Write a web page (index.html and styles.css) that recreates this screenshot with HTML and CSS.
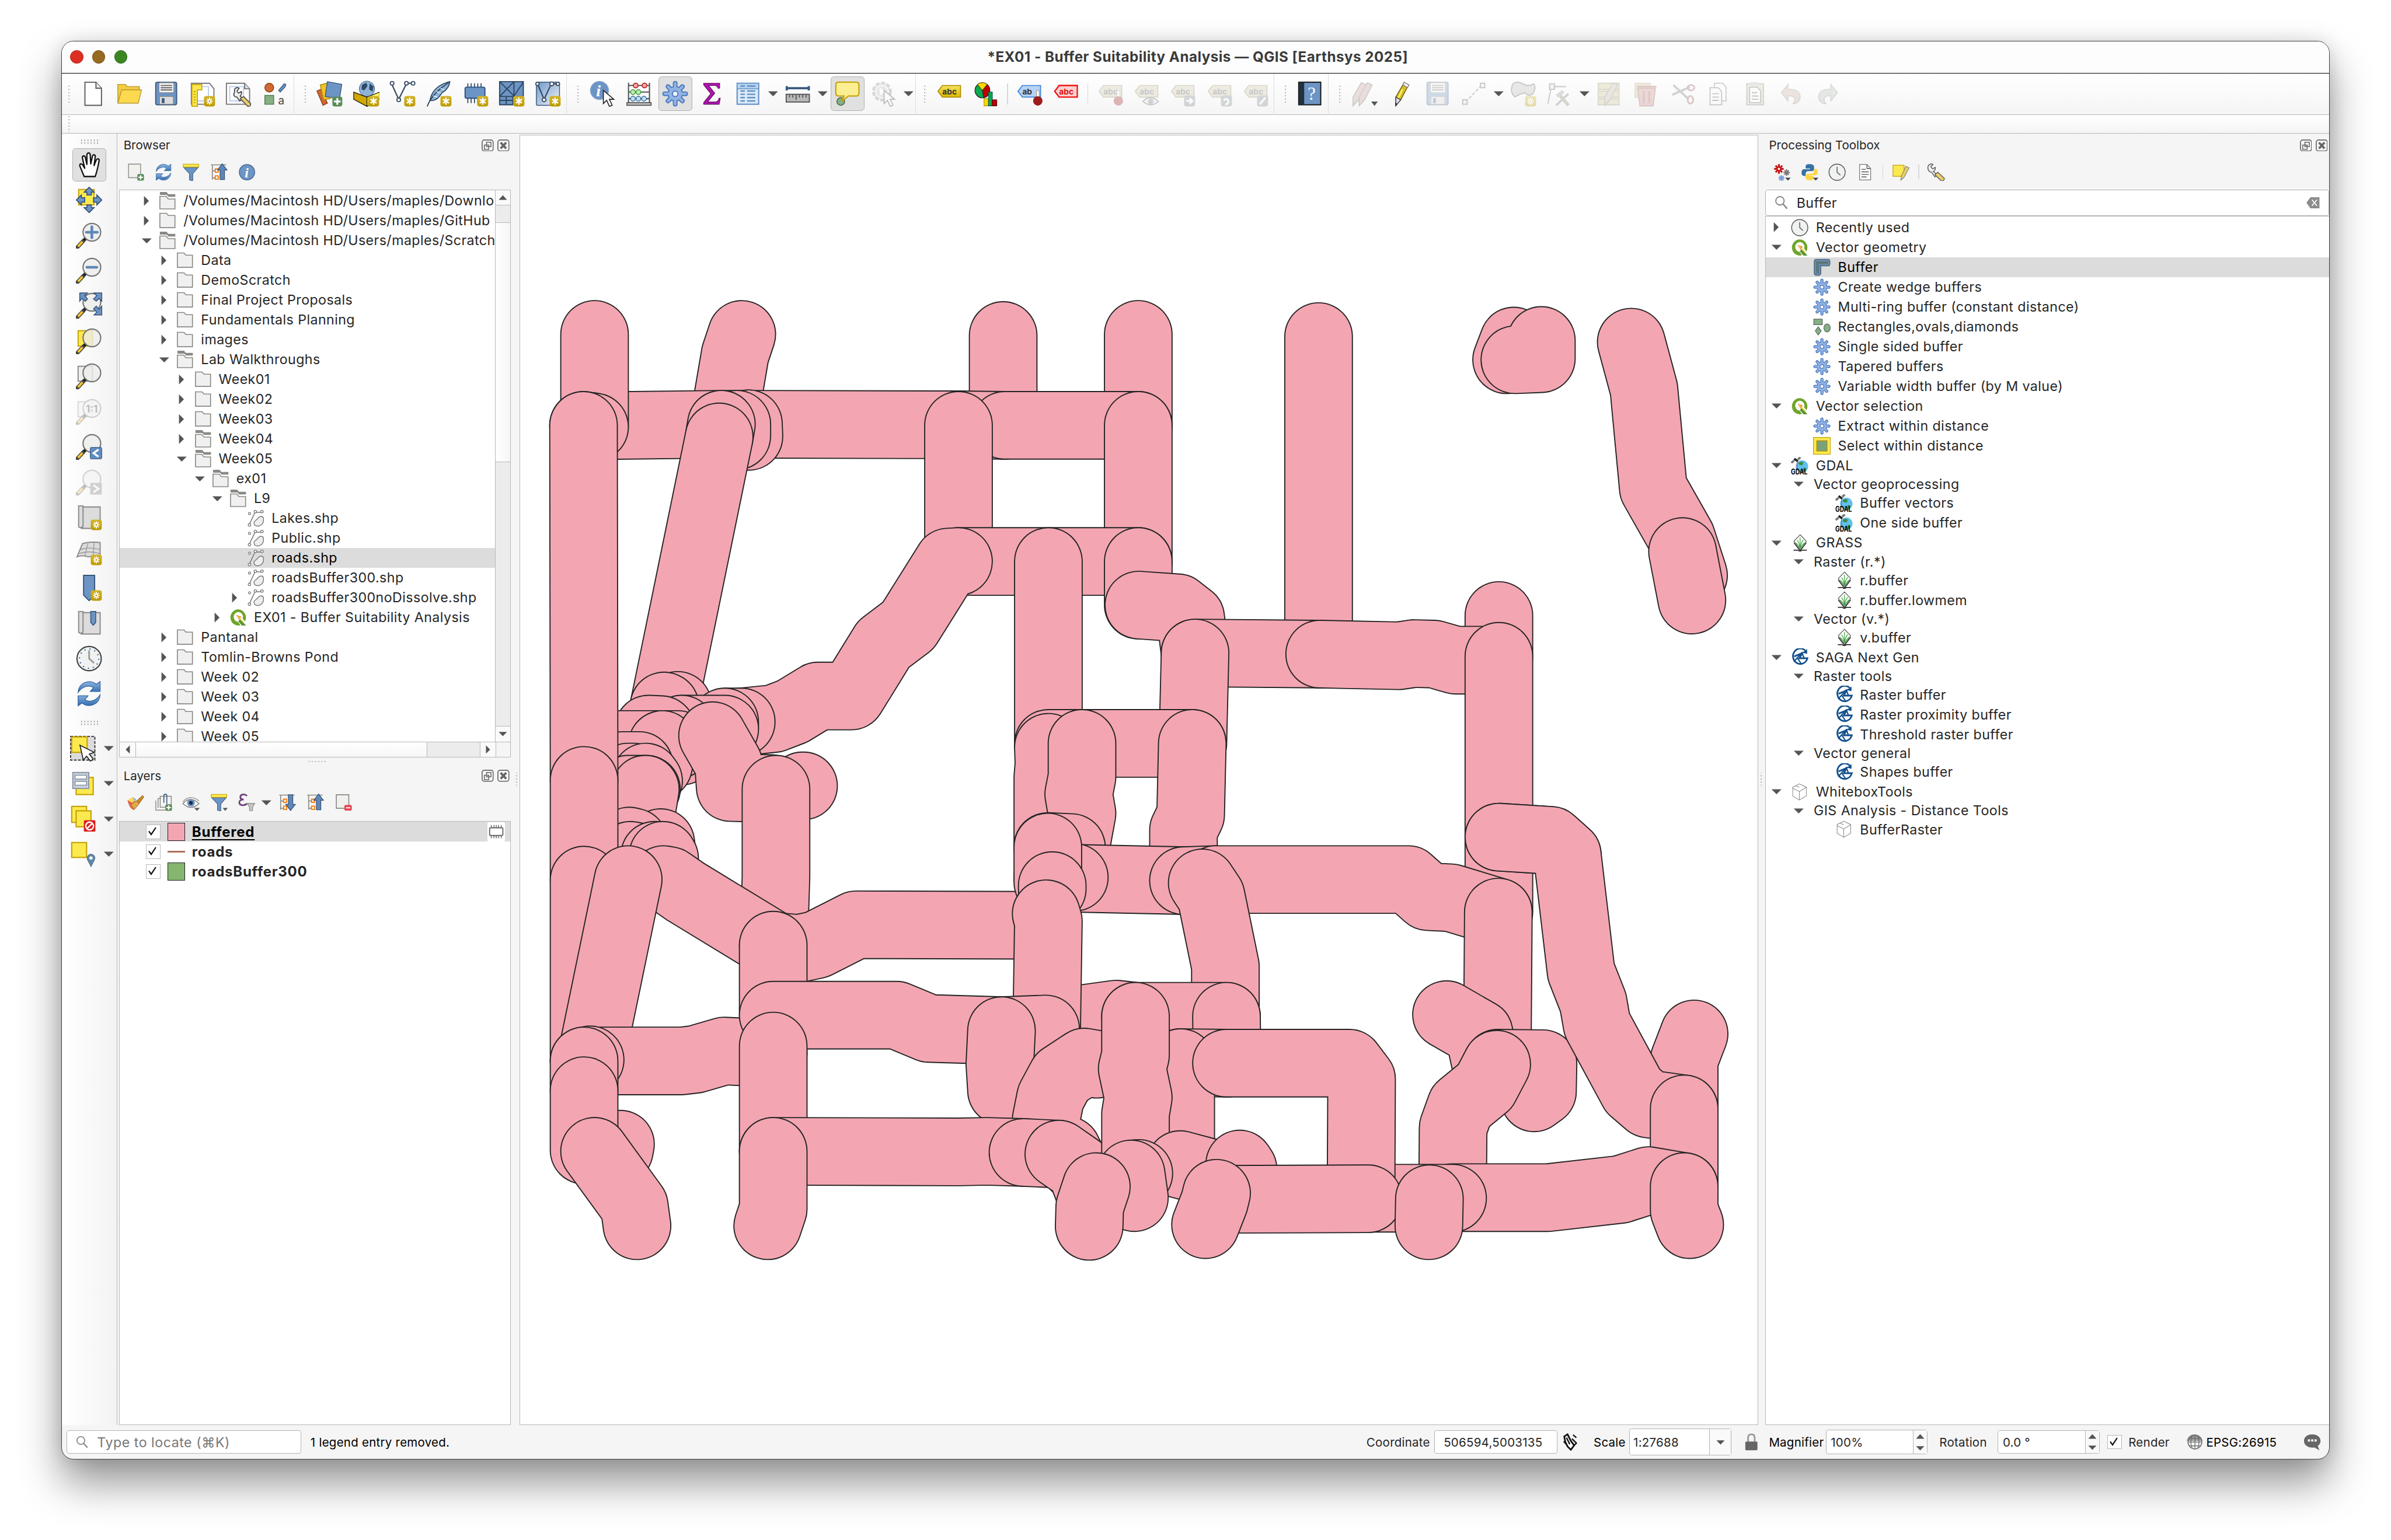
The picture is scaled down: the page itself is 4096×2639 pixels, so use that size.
FILE: index.html
```html
<!DOCTYPE html>
<html lang="en">
<head>
<meta charset="utf-8">
<title>*EX01 - Buffer Suitability Analysis — QGIS [Earthsys 2025]</title>
<link rel="stylesheet" href="styles.css">
</head>
<body>
<svg class="defs" aria-hidden="true">
<defs>
<linearGradient id="g-badge" x1="0" y1="0" x2="0" y2="1"><stop offset="0" stop-color="#d3b42a"/><stop offset="1" stop-color="#bd9a00"/></linearGradient>
<linearGradient id="g-blue" x1="0" y1="0" x2="0" y2="1"><stop offset="0" stop-color="#8fb6e0"/><stop offset="1" stop-color="#2f6cb0"/></linearGradient>
<linearGradient id="g-soft" x1="0" y1="0" x2="1" y2="1"><stop offset="0" stop-color="#6f98c9"/><stop offset="1" stop-color="#f2f5fa"/></linearGradient>
<linearGradient id="g-tag" x1="0" y1="0" x2="0" y2="1"><stop offset="0" stop-color="#f2e25c"/><stop offset="1" stop-color="#e0b800"/></linearGradient>
<symbol id="star" viewBox="0 0 48 48"><rect x="27" y="28" width="20" height="19" rx="4" fill="url(#g-badge)"/><path d="M37 31v13M31.500 34l11 7M42.500 34l-11 7" stroke="#fff" stroke-width="2.600" fill="none"/></symbol>
<symbol id="gearstar" viewBox="0 0 48 48"><rect x="27" y="28" width="20" height="19" rx="4" fill="url(#g-badge)"/><path d="M37 31v13M31 37.500h12M32.800 33l8.400 9M41.200 33l-8.400 9" stroke="#fff" stroke-width="2" fill="none"/><circle cx="37" cy="37.500" r="2.300" fill="#c4a000" stroke="#fff" stroke-width="1.500"/></symbol>
<symbol id="plus" viewBox="0 0 48 48"><rect x="29" y="29" width="18" height="18" rx="4" fill="#5a8c5a"/><path d="M38 32v12M32 38h12" stroke="#fff" stroke-width="3.500"/></symbol>
<symbol id="page" viewBox="0 0 48 48"><path d="M9 3h20l10 11v31H9z" fill="#fff" stroke="#5a5a5a" stroke-width="2"/><path d="M29 3v11h10" fill="#e8e8e8" stroke="#5a5a5a" stroke-width="2"/></symbol>
<symbol id="open" viewBox="0 0 48 48"><path d="M3 40V7h14l3 4h22v6" fill="#f3cb43" stroke="#b99a2d" stroke-width="1.500"/><path d="M3 41l7-24h36l-6 24z" fill="#fcd94f" stroke="#b99a2d" stroke-width="1.500"/></symbol>
<symbol id="save" viewBox="0 0 48 48"><rect x="5" y="3" width="38" height="41" rx="3" fill="#6c94c4" stroke="#3c5a80" stroke-width="2"/><rect x="11" y="4" width="27" height="18" rx="2" fill="#f0f0f0" stroke="#888" stroke-width="1.300"/><path d="M14 9h21M14 13h21M14 17h21" stroke="#555" stroke-width="1.800"/><rect x="12" y="29" width="25" height="14" fill="#dcdcdc" stroke="#888" stroke-width="1.300"/><rect x="16" y="32" width="5" height="9" fill="#3c5a80"/></symbol>
<symbol id="layout" viewBox="0 0 48 48"><path d="M4 5h33l8 10v28H4z" fill="#fff" stroke="#777" stroke-width="2"/><path d="M10 11h25v26H10z" fill="none" stroke="#b9cdf0" stroke-width="2"/><path d="M5 7h18v10h-8v30H5z" fill="#fce94f" stroke="#c4a000" stroke-width="1.700"/><path d="M8 20h4M8 25h4M8 30h4M8 35h4M8 40h4" stroke="#c4a000" stroke-width="1.800"/><use href="#gearstar"/></symbol>
<symbol id="layoutmgr" viewBox="0 0 48 48"><path d="M2 5h33l9 10v28H2z" fill="#fff" stroke="#777" stroke-width="2"/><path d="M8 11h25v26H8z" fill="none" stroke="#b9cdf0" stroke-width="2"/><path d="M35 5v10h9" fill="#ddd" stroke="#777" stroke-width="2"/><path d="M17 20c-2-5 3-9 8-6l-4 5 3 4 5-3c1 3 0 6-2 8l4 5-5 4-5-7c-4 0-7-3-5-7z" fill="#eee" stroke="#444" stroke-width="1.800"/><path d="M27 33l6-4 13 13q0 5-5 5z" fill="#e8cd6a" stroke="#555" stroke-width="1.800"/></symbol>
<symbol id="style" viewBox="0 0 48 48"><circle cx="13" cy="13" r="8" fill="#d06a32" stroke="#8a3f17" stroke-width="1.500"/><path d="M30 18L40 6l3 1-1 4-9 10z" fill="#6c94c4" stroke="#3c5a80" stroke-width="1.500"/><rect x="5" y="27" width="16" height="16" fill="#86b086" stroke="#4e7a4e" stroke-width="1.500"/><text x="29" y="43" font-size="20" fill="#444" class="it">a</text></symbol>
<symbol id="dsm" viewBox="0 0 48 48"><path d="M1 19l7-3 12 25-8 4z" fill="#d06a32" stroke="#8a3f17" stroke-width="1.500"/><path d="M7 8l12-3 6 28-12 2z" fill="#f0c420" stroke="#a98a10" stroke-width="1.500"/><path d="M20 2l26 5-4 26-26-4z" fill="#6c94c4" stroke="#3c5a80" stroke-width="1.500"/><use href="#plus"/></symbol>
<symbol id="gpkg" viewBox="0 0 48 48"><circle cx="25" cy="15" r="14" fill="#8fb3d8" stroke="#3c5a80"/><path d="M16 8l8-4 2 6-6 8-5-2zM30 5l7 6-2 9-6-4z" fill="#2e4a68"/><path d="M1 21l24 9v17L1 34z" fill="#d0a800" stroke="#111" stroke-width="1.300"/><path d="M48 21l-23 9v17l23-13z" fill="#fff36a" stroke="#111" stroke-width="1.300"/><use href="#star"/></symbol>
<symbol id="vlayer" viewBox="0 0 48 48"><path d="M5 8l12 26L30 8M33 5h8" fill="none" stroke="#3c4e66" stroke-width="2.400"/><g fill="#fff" stroke="#3c4e66" stroke-width="2"><circle cx="5" cy="5" r="3.300"/><circle cx="17" cy="35" r="3.300"/><circle cx="31" cy="5" r="3.300"/><circle cx="43" cy="5" r="3.300"/></g><use href="#star"/></symbol>
<symbol id="feather" viewBox="0 0 48 48"><path d="M44 2C28 6 12 14 8 36c8 2 16-4 22-14 6-3 13-10 14-20z" fill="#8fb3d8" stroke="#2d4560" stroke-width="1.800"/><path d="M42 4C26 14 10 28 3 47" fill="none" stroke="#2d4560" stroke-width="2"/><path d="M14 28l8 2M20 20l8 3M27 14l7 3" stroke="#fff" stroke-width="1.300"/><use href="#star"/></symbol>
<symbol id="chip" viewBox="0 0 48 48"><path d="M10 5v36M16 5v36M22 5v36M28 5v36M34 5v36" stroke="#2d4560" stroke-width="1.800"/><rect x="5" y="12" width="36" height="20" rx="3" fill="#6c94c4" stroke="#2d5080" stroke-width="2"/><use href="#star"/></symbol>
<symbol id="mesh" viewBox="0 0 48 48"><path d="M2 2h43v27H2zM2 29h24v15H2z" fill="#6c94c4" stroke="#2d4560" stroke-width="2"/><path d="M2 2l26 26M28 2L2 29M28 2v27M28 28L45 3M2 36h24M14 29v15" fill="none" stroke="#2d4560" stroke-width="2"/><use href="#star"/></symbol>
<symbol id="virt" viewBox="0 0 48 48"><rect x="3" y="3" width="42" height="42" rx="2" fill="url(#g-soft)" stroke="#3c5a80" stroke-width="1.500"/><path d="M4 3l13 31L30 6h12" fill="none" stroke="#2d4560" stroke-width="2.200"/><g fill="#fff" stroke="#3c4e66" stroke-width="2"><circle cx="5" cy="6" r="3"/><circle cx="17" cy="35" r="3.500"/><circle cx="31" cy="6" r="3.500"/><circle cx="42" cy="6" r="3"/></g><use href="#star"/></symbol>
<symbol id="cursor" viewBox="0 0 48 48"><path d="M25 18v24l6-6 5 11 5-2-5-11h8z" fill="#fff" stroke="#222" stroke-width="1.700"/></symbol>
<symbol id="info" viewBox="0 0 48 48"><circle cx="24" cy="24" r="21" fill="#6c94c4" stroke="#3c5f8c" stroke-width="2"/><text x="18" y="38" font-size="38" font-weight="bold" font-style="italic" fill="#fff" class="se">i</text></symbol>
<symbol id="identify" viewBox="0 0 48 48"><circle cx="18" cy="18" r="16.500" fill="#6c94c4" stroke="#8fabce" stroke-width="1.500"/><text x="12" y="29" font-size="30" font-weight="bold" font-style="italic" fill="#fff" class="se">i</text><use href="#cursor"/></symbol>
<symbol id="abacus" viewBox="0 0 48 48"><path d="M5 4v36M43 4v36M5 9h38M5 21h38M5 33h38" stroke="#555" stroke-width="2.200"/><g stroke-width="1.600"><g fill="#f4a6a0" stroke="#b01515"><circle cx="18" cy="9" r="4.300"/><circle cx="34" cy="9" r="4.300"/></g><g fill="#bdeeb0" stroke="#3f9a3f"><circle cx="13" cy="21" r="4.300"/><circle cx="23" cy="21" r="4.300"/></g><g fill="#bfe0f4" stroke="#3c6f9a"><circle cx="13" cy="33" r="4.300"/><circle cx="23" cy="33" r="4.300"/><circle cx="33" cy="33" r="4.300"/></g></g><rect x="2" y="40" width="44" height="5" fill="#bbb" stroke="#444" stroke-width="1.500"/></symbol>
<symbol id="gear" viewBox="0 0 48 48"><g stroke="#4a78c0" stroke-width="8.500" stroke-linecap="round"><path d="M24 5v38M5 24h38M11 11l26 26M37 11L11 37"/></g><circle cx="24" cy="24" r="14" fill="#4a78c0"/><g stroke="#92b3e2" stroke-width="4.500" stroke-linecap="round"><path d="M24 5v38M5 24h38M11 11l26 26M37 11L11 37"/></g><circle cx="24" cy="24" r="12" fill="#92b3e2"/><circle cx="24" cy="24" r="5" fill="#f4f7fc" stroke="#4a78c0" stroke-width="2"/></symbol>
<symbol id="sigma" viewBox="0 0 48 48"><path d="M9 5h29v9h-3c-1-4-3-5-7-5H18l11 14-13 16h14c4 0 6-3 7-7h2l-2 11H9v-3l13-16L9 8z" fill="#b314b3" stroke="#5a0a5a" stroke-width="1.200"/></symbol>
<symbol id="table" viewBox="0 0 48 48"><rect x="4" y="5" width="39" height="38" fill="#dcebf8" stroke="#5f8fc4" stroke-width="2.200"/><rect x="4" y="5" width="39" height="10" fill="#b9d4ee" stroke="#5f8fc4" stroke-width="1.500"/><path d="M10 10h8M22 10h15M10 19h8M22 19h15M10 25h8M22 25h15M10 31h8M22 31h15M10 37h8M22 37h15" stroke="#5f8fc4" stroke-width="2.600"/></symbol>
<symbol id="ruler" viewBox="0 0 48 48"><path d="M4 14h40M4 10v8M44 10v8" stroke="#3c5a80" stroke-width="4"/><rect x="3" y="25" width="42" height="14" fill="#b9b9b9" stroke="#555" stroke-width="2"/><path d="M9 26v5M15 26v5M21 26v9M27 26v5M33 26v5M39 26v5" stroke="#444" stroke-width="1.600"/></symbol>
<symbol id="tip" viewBox="0 0 48 48"><circle cx="12" cy="38" r="7" fill="#86b086" stroke="#44664a" stroke-width="1.600"/><path d="M8 3h32q5 0 5 5v15q0 5-5 5H26L13 38l5-10H8q-5 0-5-5V8q0-5 5-5z" fill="#fcee92" stroke="#c4a000" stroke-width="2.200"/></symbol>
<symbol id="action" viewBox="0 0 48 48"><circle cx="21" cy="20" r="16" fill="#eee" stroke="#888" stroke-width="4" stroke-dasharray="7 3.500"/><circle cx="21" cy="20" r="13.500" fill="#eee" stroke="#888" stroke-width="1.500"/><circle cx="21" cy="20" r="10" fill="#b5bac2"/><path d="M17 13l10 7-10 7z" fill="#fff"/><use href="#cursor"/></symbol>
<symbol id="abc" viewBox="0 0 48 48"><path d="M4 19.500L12 9h33v21H12z" fill="url(#g-tag)" stroke="#b08d00" stroke-width="1.800"/><text x="12" y="25" font-size="14.500" font-weight="bold" fill="#333" class="it">abc</text></symbol>
<symbol id="abcg" viewBox="0 0 48 48"><path d="M4 19.500L12 9h33v21H12z" fill="#cfc9a8" stroke="#8d875f" stroke-width="1.800"/><text x="12" y="25" font-size="14.500" font-weight="bold" fill="#555" class="it">abc</text></symbol>
<symbol id="abcred" viewBox="0 0 48 48"><path d="M4 19.500L12 9h33v21H12z" fill="#fbd0d0" stroke="#f01010" stroke-width="2.400"/><text x="12" y="25" font-size="14.500" font-weight="bold" fill="#e01010" class="it">abc</text></symbol>
<symbol id="pin" viewBox="0 0 48 48"><path d="M36.500 18h5v12h-5z" fill="#fff" stroke="#888"/><circle cx="39" cy="37" r="8.500" fill="#9c1c1c"/></symbol>
<symbol id="abpin" viewBox="0 0 48 48"><path d="M3 19.500L11 9h33v21H11z" fill="#b5d3f5" stroke="#3c82d8" stroke-width="1.800"/><text x="11" y="25" font-size="14.500" font-weight="bold" fill="#333" class="it">ab</text><use href="#pin"/></symbol>
<symbol id="chart" viewBox="0 0 48 48"><circle cx="19" cy="18" r="13.500" fill="#0aa84f" stroke="#222" stroke-width="1.300"/><path d="M19 18L10 7a14 14 0 0 1 18 0z" fill="#ffd800" stroke="#222"/><path d="M19 18L28 7a14 14 0 0 1-7 24z" fill="#c00000" stroke="#222"/><g stroke-width="1.200"><path d="M22 33h8v13h-8z" fill="#ffd800" stroke="#b58d00"/><path d="M30 21h7v25h-7z" fill="#0aa84f" stroke="#055"/><path d="M37 35h8v11h-8z" fill="#c00000" stroke="#600"/></g></symbol>
<symbol id="eyeb" viewBox="0 0 48 48"><path d="M18 38q12-14 28 0-14 12-28 0z" fill="#eee" stroke="#555" stroke-width="2"/><circle cx="32" cy="38" r="5" fill="#777"/></symbol>
<symbol id="sqb" viewBox="0 0 48 48"><rect x="27" y="27" width="20" height="20" rx="4" fill="#7f8790"/></symbol>
<symbol id="help" viewBox="0 0 48 48"><rect x="4" y="3" width="40" height="41" fill="#6c94c4" stroke="#111" stroke-width="2"/><path d="M4 3h10v41H4z" fill="#22303f"/><text x="20" y="35" font-size="33" fill="#fff" class="se">?</text></symbol>
<symbol id="pencil" viewBox="0 0 48 48"><path d="M15 30L30 4l8 4-14 27-9 10z" fill="#d8c020" stroke="#6b5c10" stroke-width="1.500"/><path d="M30 3l9 5-3 5-8-5z" fill="#eee" stroke="#777" stroke-width="1.300"/><path d="M27 16L19 33" stroke="#fff27a" stroke-width="2.500"/><path d="M15 30l9 5-9 11z" fill="#ddd" stroke="#444" stroke-width="1.500"/><path d="M14 40l4 2-4 5z" fill="#333"/></symbol>
<symbol id="pencils" viewBox="0 0 48 48"><g fill="#c9a9a0" stroke="#666" stroke-width="1.500"><path d="M3 30L18 4l9 4-14 27-10 11z"/><path d="M14 30L29 4l9 4-14 27-10 11z"/></g><path d="M26 8l-12 24M37 8L25 32" stroke="#a88" stroke-width="2"/></symbol>
<symbol id="linev" viewBox="0 0 48 48"><path d="M9 39L38 9" stroke="#777" stroke-width="2.500" stroke-dasharray="6 3"/><path d="M4 35h8v8H4zM36 5h8v8h-8z" fill="#eee" stroke="#555" stroke-width="2"/></symbol>
<symbol id="poly" viewBox="0 0 48 48"><path d="M5 6q8-6 18 0t20 0q5 8-2 18-8 6-14-2-10 2-18 8Q-2 20 5 6z" fill="#b8bdb8" stroke="#555" stroke-width="2"/><use href="#gearstar"/></symbol>
<symbol id="vtx" viewBox="0 0 48 48"><path d="M10 6L3 42M10 11h26" stroke="#666" stroke-width="2.200"/><path d="M6 6h9v10H6z" fill="#ddd" stroke="#555" stroke-width="2"/><path d="M40 24L18 45" stroke="#777" stroke-width="4"/><path d="M24 26l16 19" stroke="#8d8560" stroke-width="6"/><path d="M17 26l12-9 4 5-12 9z" fill="#999"/></symbol>
<symbol id="multi" viewBox="0 0 48 48"><path d="M4 5h38v11H4zM4 19h38v11H4zM4 33h38v11H4z" fill="#cdc58c" stroke="#8d855a" stroke-width="1.800"/><path d="M16 30L31 4l8 4-14 27-9 10z" fill="#cdb5a5" stroke="#777" stroke-width="1.500"/></symbol>
<symbol id="trash" viewBox="0 0 48 48"><path d="M4 5h28v26H4z" fill="#cdc58c" stroke="#8d855a"/><path d="M9 14h32l-4 32H13z" fill="#d08a8a" stroke="#a05050" stroke-width="2"/><path d="M8 11h35M20 19v22M30 19v22" stroke="#a05050" stroke-width="3"/></symbol>
<symbol id="cut" viewBox="0 0 48 48"><path d="M8 8l28 26M6 26l32-14" stroke="#777" stroke-width="4"/><ellipse cx="40" cy="13" rx="6" ry="5" fill="none" stroke="#a05050" stroke-width="3"/><ellipse cx="39" cy="35" rx="5" ry="7" fill="none" stroke="#a05050" stroke-width="3"/></symbol>
<symbol id="copy" viewBox="0 0 48 48"><path d="M17 5h15l6 7v25H17z" fill="#fff" stroke="#666" stroke-width="1.800"/><path d="M9 13h15l6 7v24H9z" fill="#fff" stroke="#555" stroke-width="1.800"/><path d="M13 24h12M13 30h12M13 36h12" stroke="#555" stroke-width="2"/></symbol>
<symbol id="paste" viewBox="0 0 48 48"><path d="M9 6h30v38H9z" fill="#d8d2b0" stroke="#777" stroke-width="2"/><path d="M14 12h14l6 7v21H14z" fill="#fff" stroke="#555" stroke-width="1.800"/><path d="M16 3h15v8H16z" fill="#bbb"/><path d="M18 22h10M18 28h12M18 34h12" stroke="#555" stroke-width="2"/></symbol>
<symbol id="undo" viewBox="0 0 48 48"><path d="M6 22L18 7v9c14-1 22 4 22 14 0 7-5 12-13 12 6-8 4-15-9-14v9z" fill="#d0b0a0" stroke="#888" stroke-width="1.600"/></symbol>
<symbol id="redo" viewBox="0 0 48 48"><path d="M42 22L30 7v9C16 15 8 20 8 30c0 7 5 12 13 12-6-8-4-15 9-14v9z" fill="#b5c0b5" stroke="#888" stroke-width="1.600"/></symbol>
<symbol id="hand" viewBox="0 0 48 48"><path d="M15 45l-7-17c-3-6 2-8 5-3l3 5-4-18c-1-5 4-6 5-2l3 13V6c0-5 6-5 6 0l1 16 3-14c1-4 6-3 5 2l-2 15 4-10c2-4 6-2 5 2-2 11-4 20-7 28z" fill="#fff" stroke="#111" stroke-width="2.400" stroke-linejoin="round"/></symbol>
<symbol id="panto" viewBox="0 0 48 48"><rect x="5" y="5" width="28" height="28" fill="#fce94f" stroke="#c4a000" stroke-width="2"/><path d="M24 1l9 9h-5v5h-8v-5h-5zM24 47l9-9h-5v-5h-8v5h-5zM1 24l9-9v5h6v8h-6v5zM47 24l-9-9v5h-6v8h6v5z" fill="#6c94c4" stroke="#35537a" stroke-width="1.800"/></symbol>
<symbol id="lens" viewBox="0 0 48 48"><path d="M3 45l11-12" stroke="#444" stroke-width="7" stroke-linecap="round"/><path d="M4 44l8-9" stroke="#fcc62f" stroke-width="4"/><circle cx="17" cy="30" r="3" fill="#111"/><circle cx="29" cy="18" r="16" fill="#ececea" fill-opacity=".8" stroke="#777" stroke-width="2.300"/></symbol>
<symbol id="zin" viewBox="0 0 48 48"><use href="#lens"/><path d="M29 8v20M19 18h20" stroke="#5f88b8" stroke-width="5" stroke-linecap="round"/></symbol>
<symbol id="zout" viewBox="0 0 48 48"><use href="#lens"/><path d="M20 18h18" stroke="#5f88b8" stroke-width="5" stroke-linecap="round"/></symbol>
<symbol id="zfull" viewBox="0 0 48 48"><use href="#lens"/><path d="M7 1h14l-5 5 5 6-4 4-6-5-4 5zM47 1H33l5 5-6 6 5 4 5-5 5 5zM47 41H33l5-5-6-6 5-5 5 6 5-6z" fill="#6c94c4" stroke="#35537a" stroke-width="1.600"/></symbol>
<symbol id="zsel" viewBox="0 0 48 48"><rect x="4" y="5" width="26" height="28" fill="#fce94f" stroke="#c4a000" stroke-width="2"/><use href="#lens"/></symbol>
<symbol id="zlay" viewBox="0 0 48 48"><rect x="4" y="6" width="26" height="27" fill="#eee" stroke="#888" stroke-width="2"/><use href="#lens"/></symbol>
<symbol id="znat" viewBox="0 0 48 48"><use href="#zlay"/><text x="18" y="25" font-size="18" font-weight="bold" fill="#333" class="it">1:1</text></symbol>
<symbol id="zprev" viewBox="0 0 48 48"><use href="#lens"/><rect x="26" y="25" width="21" height="21" rx="2" fill="#5f8cc0" stroke="#35537a"/><path d="M41 29l-9 6.500 9 6.500" fill="none" stroke="#fff" stroke-width="3.500"/></symbol>
<symbol id="znext" viewBox="0 0 48 48"><use href="#lens"/><rect x="26" y="25" width="21" height="21" rx="2" fill="#777"/><path d="M32 29l9 6.500-9 6.500" fill="none" stroke="#fff" stroke-width="3.500"/></symbol>
<symbol id="scroll" viewBox="0 0 48 48"><path d="M5 3h8v36q-3 6-8 2zM13 5h31v39H9q4-1 4-6z" fill="#dcdcdc" stroke="#888" stroke-width="2"/></symbol>
<symbol id="newmap" viewBox="0 0 48 48"><use href="#scroll"/><use href="#gearstar"/></symbol>
<symbol id="new3d" viewBox="0 0 48 48"><path d="M12 8q12-4 32-2v28q-14-4-22-2-10-4-20 0z" fill="#dcdcdc" stroke="#888" stroke-width="2"/><path d="M8 19q14-6 36 0M6 26q16-6 38 0M22 7l-6 24M33 6l-2 26" fill="none" stroke="#999" stroke-width="1.400"/><use href="#gearstar"/></symbol>
<symbol id="bkm" viewBox="0 0 48 48"><path d="M14 1h20v36l-10 10-10-10z" fill="#6c94c4" stroke="#35537a" stroke-width="2"/><use href="#gearstar"/></symbol>
<symbol id="bkms" viewBox="0 0 48 48"><use href="#scroll"/><path d="M27 3h9v20l-4.500 5-4.500-5z" fill="#6c94c4" stroke="#35537a" stroke-width="1.600"/></symbol>
<symbol id="clock" viewBox="0 0 48 48"><circle cx="24" cy="24" r="22" fill="#f0f2f2" stroke="#555" stroke-width="2.300"/><path d="M24 9v15l9 8" fill="none" stroke="#666" stroke-width="2.600"/></symbol>
<symbol id="clockt" viewBox="0 0 48 48"><circle cx="24" cy="24" r="22" fill="#f0f2f2" stroke="#444" stroke-width="2.300"/><circle cx="24" cy="24" r="17.500" fill="none" stroke="#4a6f9a" stroke-width="2.300" stroke-dasharray="2.300 6.860"/><path d="M24 9v15l9 8" fill="none" stroke="#999" stroke-width="3"/></symbol>
<symbol id="refresh" viewBox="0 0 48 48"><path d="M4 22C5 4 24-3 37 7l7-5v18H26l6-7C24 8 12 10 4 22z" fill="url(#g-blue)" stroke="#2f62a0" stroke-width="1.300"/><path d="M44 26C43 44 24 51 11 41l-7 5V28h18l-6 7c8 5 20 3 28-9z" fill="url(#g-blue)" stroke="#2f62a0" stroke-width="1.300"/></symbol>
<symbol id="select" viewBox="0 0 48 48"><rect x="1" y="2" width="44" height="43" fill="#dcdcdc" stroke="#333" stroke-width="2" stroke-dasharray="5 2.500"/><rect x="3" y="3" width="28" height="28" fill="#fce94f" stroke="#c4a000" stroke-width="2.200"/><path d="M18 18l6 27 6-7 7 9 5-4-7-9 9-3z" fill="#fff" stroke="#222" stroke-width="1.800"/></symbol>
<symbol id="selval" viewBox="0 0 48 48"><rect x="11" y="13" width="31" height="31" fill="#fce94f" stroke="#c4a000" stroke-width="2.200"/><rect x="5" y="4" width="29" height="29" fill="#c9d3df" stroke="#8792a0" stroke-width="2"/><path d="M9 9h21v7H9zM9 20h21v7H9z" fill="#fff" stroke="#8792a0" stroke-width="1.800"/></symbol>
<symbol id="desel" viewBox="0 0 48 48"><rect x="3" y="2" width="27" height="29" fill="#fce94f" stroke="#c4a000" stroke-width="2.200"/><rect x="11" y="10" width="27" height="29" fill="#fce94f" stroke="#c4a000" stroke-width="2.200"/><rect x="25" y="27" width="21" height="21" rx="2" fill="#dc2020"/><circle cx="35.500" cy="37.500" r="7" fill="none" stroke="#fff" stroke-width="2.500"/><path d="M31 42l9-9" stroke="#fff" stroke-width="2.500"/></symbol>
<symbol id="selloc" viewBox="0 0 48 48"><rect x="3" y="3" width="27" height="27" fill="#fce94f" stroke="#c4a000" stroke-width="2.200"/><path d="M38 47c-4-9-7-12-7-16a7 7 0 0 1 14 0c0 4-3 7-7 16z" fill="#5d87a8" stroke="#3d5f7a"/><circle cx="38" cy="31" r="3" fill="#fff"/></symbol>
<symbol id="addl" viewBox="0 0 48 48"><path d="M5 2h33v37H5z" fill="#f0f0ee" stroke="#8a8a84" stroke-width="2.200"/><use href="#plus"/></symbol>
<symbol id="reml" viewBox="0 0 48 48"><path d="M5 3h34v37H5z" fill="#f0f0ee" stroke="#8a8a84" stroke-width="2.600"/><rect x="27" y="31" width="20" height="15" rx="3" fill="#e84050"/><path d="M31 38.500h12" stroke="#fff" stroke-width="3"/></symbol>
<symbol id="filter" viewBox="0 0 48 48"><path d="M4 11l16 17v17l9 3V28l15-17z" fill="#6c94c4" stroke="#44658c" stroke-width="1.800"/><path d="M3 2h42v8H3z" fill="#fce94f" stroke="#c4a000" stroke-width="1.800"/></symbol>
<symbol id="tree" viewBox="0 0 48 48"><path d="M2 4h42M6 4v40M6 20h8M6 40h8" fill="none" stroke="#8a8a84" stroke-width="2.600"/><path d="M14 15h8v9h-8zM14 34h8v9h-8z" fill="#fff" stroke="#f57900" stroke-width="3"/></symbol>
<symbol id="collapse" viewBox="0 0 48 48"><use href="#tree"/><path d="M33 1l13 17h-7v26H27V18h-7z" fill="#5f88b8" stroke="#35537a" stroke-width="2"/></symbol>
<symbol id="expand" viewBox="0 0 48 48"><use href="#tree"/><path d="M33 46l13-17h-7V3H27v26h-7z" fill="#5f88b8" stroke="#35537a" stroke-width="2"/></symbol>
<symbol id="brush" viewBox="0 0 48 48"><path d="M2 18l14-9 8 12-14 8z" fill="#f6d860"/><path d="M2 18l4 12 10-4z" fill="#e05a50"/><path d="M16 9l10 6-4 6z" fill="#8fb3e0"/><path d="M6 30l16-10 10 10-12 15q-10-4-14-15z" fill="#e06a50"/><path d="M12 30l14-11 8 9-12 14q-8-4-10-12z" fill="#e0a848" stroke="#a86a14" stroke-width="1.400"/><path d="M27 20L43 5l4 4-13 18z" fill="#c98a2a" stroke="#8a5a14" stroke-width="1.400"/></symbol>
<symbol id="group" viewBox="0 0 48 48"><path d="M3 19v26h26M9 13v26M9 13h8M15 7h30v30H15z" fill="none" stroke="#8a8a84" stroke-width="2.400"/><path d="M25 25V4q4-6 8 0v24" fill="none" stroke="#35537a" stroke-width="2.500"/><use href="#plus"/></symbol>
<symbol id="eye" viewBox="0 0 48 48"><path d="M2 22Q22 0 46 20" fill="none" stroke="#8a8a84" stroke-width="2"/><path d="M2 27Q22 4 46 27 24 48 2 27z" fill="#fff" stroke="#777" stroke-width="2"/><circle cx="24" cy="25" r="10.500" fill="#6c94c4"/><circle cx="24" cy="25" r="5" fill="#1c2c40"/></symbol>
<symbol id="eps" viewBox="0 0 48 48"><path d="M24 6C16-1 5 3 6 10c0 4 4 6 9 6-7 0-12 3-12 8 0 9 14 10 21 3" fill="none" stroke="#6c3f78" stroke-width="4.500"/><path d="M25 27h20l-6 10v11h-8V37z" fill="#c8c8c4" stroke="#8a8a84" stroke-width="2"/></symbol>
<symbol id="folder" viewBox="0 0 48 48"><path d="M3 4h18l5 6h18v33H3z" fill="#f0f0f0" stroke="#888a85" stroke-width="2.600"/></symbol>
<symbol id="folders" viewBox="0 0 48 48"><path d="M3 0h18l5 6h19v7H26l-4-5H3z" fill="#888a85"/><path d="M3 12h17l6 7h18v27H3z" fill="#f0f0f0" stroke="#888a85" stroke-width="2.600"/></symbol>
<symbol id="shp" viewBox="0 0 48 48"><path d="M7 40L22 8h18M7 8v2" stroke="#777" stroke-width="2.400" fill="none"/><g fill="#fff" stroke="#777" stroke-width="2"><circle cx="7" cy="11" r="3"/><circle cx="7" cy="42" r="3.500"/><circle cx="23" cy="6" r="3.500"/><circle cx="41" cy="6" r="3.500"/></g><path d="M20 40c-3-10 6-9 11-17 5-6 13-5 14 2 1 9-3 17-12 20-6 1-11 0-13-5z" fill="#eee" stroke="#777" stroke-width="2.200"/></symbol>
<symbol id="q" viewBox="0 0 48 48"><path d="M24 2a21 22 0 1 0 6 43l-6-9a12.500 13.500 0 1 1 12-9l6 8A22 22 0 0 0 24 2z" fill="#6fa52c"/><path d="M30 28l15 18H34L24 34z" fill="#589632"/><path d="M18 17l14 5-5 9z" fill="#ee7913"/><path d="M22 20l17 18" stroke="#f0d64a" stroke-width="3"/></symbol>
<symbol id="bufi" viewBox="0 0 48 48"><path d="M3 8q0-6 6-6h33q4 0 4 9t-4 9H21v20q0 6-9 6t-9-6z" fill="#6a8aa6" stroke="#46637e" stroke-width="2"/><path d="M12 40V11h28" fill="none" stroke="#3c4e3c" stroke-width="4"/><path d="M12 40V11h28" fill="none" stroke="#7fa07f" stroke-width="1.500"/></symbol>
<symbol id="shapes" viewBox="0 0 48 48"><g fill="#86b086" stroke="#5a6a5a" stroke-width="2"><path d="M2 3h23v15H2zM14 24l8 11-8 11-8-11z"/><ellipse cx="38" cy="27" rx="8.500" ry="11"/></g></symbol>
<symbol id="seld" viewBox="0 0 48 48"><rect x="1" y="1" width="46" height="46" fill="#fce94f" stroke="#c4a000" stroke-width="2"/><rect x="10" y="10" width="28" height="28" fill="#7aa27a" stroke="#a88a00" stroke-width="2"/></symbol>
<symbol id="gdal" viewBox="0 0 48 48"><circle cx="30" cy="26" r="17" fill="#62c0ee"/><path d="M20 16q8-5 14-1l-3 8-9-2zM34 29l8 2-5 11-5-3z" fill="#3c8a3c"/><path d="M1 16l8-6M19 7l7-6" stroke="#777" stroke-width="6"/><path d="M9 5l10 7" stroke="#222" stroke-width="6"/><path d="M17 14v18" stroke="#d04040" stroke-width="1.800"/><text x="0" y="47" font-size="20" font-weight="bold" fill="#000" class="it" textLength="45" lengthAdjust="spacingAndGlyphs">GDAL</text></symbol>
<symbol id="grass" viewBox="0 0 48 48"><path d="M25 2l17 18-17 23L8 20z" fill="#fff" stroke="#555" stroke-width="1.800"/><path d="M7 44h12l6 4 5-4h13" fill="none" stroke="#111" stroke-width="2.200"/><path d="M8 24l17 22 17-22" fill="none" stroke="#222" stroke-width="2"/><path d="M17 17q6 8 8 22M25 9v30M34 16q-7 8-9 23M12 24q8 5 12 15M38 24q-8 5-12 15" fill="none" stroke="#3aa53a" stroke-width="1.900"/></symbol>
<symbol id="saga" viewBox="0 0 48 48"><path d="M43 11A20 21 0 1 0 45 27H23l8-14-22 9" fill="none" stroke="#13508e" stroke-width="4.500"/><path d="M8 36L30 12l6 15M18 27l10 15" fill="none" stroke="#13508e" stroke-width="3.500"/><path d="M44 2v13l-12-3z" fill="#13508e"/></symbol>
<symbol id="wbt" viewBox="0 0 48 48"><path d="M23 2l19 9v24L23 46 5 35V11zM5 14l18 9 18-11M23 23v23M14 8l9 3" fill="#fff" stroke="#888" stroke-width="1.600"/></symbol>
<symbol id="gears" viewBox="0 0 48 48"><g stroke="#c81414" stroke-width="5"><path d="M15 2v26M2 15h26M6 6l18 18M24 6L6 24"/></g><circle cx="15" cy="15" r="3" fill="#fff"/><g stroke="#777" stroke-width="3.500"><path d="M36 16v18M27 25h18M30 19l12 12M42 19L30 31"/></g><g stroke="#7f9fd8" stroke-width="3.500"><path d="M22 32v16M14 40h16M16 34l12 12M28 34L16 46"/></g><path d="M32 39h15l-7.500 8z" fill="#444"/></symbol>
<symbol id="py" viewBox="0 0 48 48"><path d="M23 2c-8 0-10 3-10 7v5h12v2H9c-5 0-7 4-7 9s2 9 6 9h5v-6c0-4 3-7 7-7h11c3 0 5-3 5-6V9c0-4-4-7-13-7z" fill="#3672a4"/><path d="M25 46c8 0 10-3 10-7v-5H23v-2h16c5 0 7-4 7-9s-2-8-6-8h-4v6c0 4-3 7-7 7H18c-3 0-5 3-5 6v5c0 4 4 7 12 7z" fill="#ffd545"/><path d="M33 39h15l-7.500 8z" fill="#444"/></symbol>
<symbol id="log" viewBox="0 0 48 48"><path d="M9 3h20l10 11v31H9z" fill="#fff" stroke="#777" stroke-width="2"/><path d="M29 3v11h10M14 16h12M14 23h20M14 30h20M14 37h14" fill="none" stroke="#555" stroke-width="2.200"/></symbol>
<symbol id="edf" viewBox="0 0 48 48"><path d="M3 5h30v30H3z" fill="#fce94f" stroke="#c4a000" stroke-width="2"/><path d="M38 8l9 4-14 26-9 8 2-12z" fill="#e8cd6a" stroke="#777" stroke-width="1.600"/></symbol>
<symbol id="wr2" viewBox="0 0 48 48"><path d="M1 12C0 5 8-1 15 3l-6 6 5 6 7-4c1 6-1 9-5 11l10 9-6 6-9-13C5 24 1 19 1 12z" fill="#eee" stroke="#555" stroke-width="2.200"/><path d="M20 31l8-7 18 17q-1 7-8 7z" fill="#e8cd6a" stroke="#555" stroke-width="2.200"/></symbol>
<symbol id="ar" viewBox="0 0 24 24"><path d="M7 3l9 9-9 9z" fill="#555"/></symbol>
<symbol id="ad" viewBox="0 0 24 24"><path d="M3 8h18l-9 9z" fill="#555"/></symbol>
<symbol id="au" viewBox="0 0 24 24"><path d="M3 17h18l-9-10z" fill="#555"/></symbol>
<symbol id="al" viewBox="0 0 24 24"><path d="M17 3l-9 9 9 9z" fill="#555"/></symbol>
<symbol id="float" viewBox="0 0 22 22"><rect x="1" y="1" width="20" height="20" rx="4" fill="none" stroke="#666" stroke-width="1.800"/><path d="M9 5h8v8h-8zM5 10h8v8H5z" fill="#f5f5f5" stroke="#666" stroke-width="1.600"/></symbol>
<symbol id="close" viewBox="0 0 22 22"><rect x="1" y="1" width="20" height="20" rx="4" fill="none" stroke="#666" stroke-width="1.800"/><path d="M6 5.500l10 11M16 5.500l-10 11" stroke="#666" stroke-width="4"/></symbol>
<symbol id="mag" viewBox="0 0 24 24"><circle cx="10" cy="9" r="7" fill="none" stroke="#8c8c8c" stroke-width="2"/><path d="M15 14l7 8" stroke="#8c8c8c" stroke-width="2.600"/></symbol>
<symbol id="tick" viewBox="0 0 26 26"><path d="M5 13l5 7L20 5" fill="none" stroke="#111" stroke-width="2.800"/></symbol>
</defs>
</svg>

<main class="window">
<header class="titlebar"><i class="light red"></i><i class="light amber"></i><i class="light green"></i><h1>*EX01 - Buffer Suitability Analysis — QGIS [Earthsys 2025]</h1></header>

<nav class="bars">
<div class="tb"><i class="grip"></i><b class="t"><svg><use href="#page"/></svg></b><b class="t"><svg><use href="#open"/></svg></b><b class="t"><svg><use href="#save"/></svg></b><b class="t"><svg><use href="#layout"/></svg></b><b class="t"><svg><use href="#layoutmgr"/></svg></b><b class="t"><svg><use href="#style"/></svg></b></div>
<div class="tb"><i class="grip"></i><b class="t"><svg><use href="#dsm"/></svg></b><b class="t"><svg><use href="#gpkg"/></svg></b><b class="t"><svg><use href="#vlayer"/></svg></b><b class="t"><svg><use href="#feather"/></svg></b><b class="t"><svg><use href="#chip"/></svg></b><b class="t"><svg><use href="#mesh"/></svg></b><b class="t"><svg><use href="#virt"/></svg></b></div>
<div class="tb"><i class="grip"></i><b class="t"><svg><use href="#identify"/></svg></b><b class="t"><svg><use href="#abacus"/></svg></b><b class="t on"><svg><use href="#gear"/></svg></b><b class="t"><svg><use href="#sigma"/></svg></b><b class="t"><svg><use href="#table"/></svg></b><svg class="dd"><use href="#ad"/></svg><b class="t"><svg><use href="#ruler"/></svg></b><svg class="dd"><use href="#ad"/></svg><b class="t on"><svg><use href="#tip"/></svg></b><b class="t off"><svg><use href="#action"/></svg></b><svg class="dd"><use href="#ad"/></svg></div>
<div class="tb labels"><i class="grip"></i><b class="t"><svg><use href="#abc"/></svg></b><b class="t"><svg><use href="#chart"/></svg></b><i class="sep"></i><b class="t"><svg><use href="#abpin"/></svg></b><b class="t"><svg><use href="#abcred"/></svg></b><i class="sep"></i><b class="t off"><svg><use href="#abcg"/><use href="#pin"/></svg></b><b class="t off"><svg><use href="#abcg"/><use href="#eyeb"/></svg></b><b class="t off"><svg viewBox="0 0 48 48"><use href="#abcg"/><use href="#sqb"/><path d="M31 37h10M37 32l5 5-5 5" fill="none" stroke="#fff" stroke-width="3.500"/></svg></b><b class="t off"><svg viewBox="0 0 48 48"><use href="#abcg"/><use href="#sqb"/><path d="M35 44q8-3 5-8t-8 0" fill="none" stroke="#fff" stroke-width="3.500"/></svg></b><b class="t off"><svg viewBox="0 0 48 48"><use href="#abcg"/><use href="#sqb"/><path d="M32 43l10-12" fill="none" stroke="#fff" stroke-width="3.500"/></svg></b></div>
<div class="tb"><i class="grip"></i><b class="t"><svg><use href="#help"/></svg></b></div>
<div class="tb grow"><i class="grip"></i><b class="t menu"><svg viewBox="0 0 48 48"><use href="#pencils" opacity=".35"/><path d="M36 38h12l-6 8z" fill="#555"/></svg></b><b class="t"><svg><use href="#pencil"/></svg></b><b class="t off"><svg><use href="#save"/></svg></b><b class="t off"><svg><use href="#linev"/></svg></b><svg class="dd"><use href="#ad"/></svg><b class="t off"><svg><use href="#poly"/></svg></b><b class="t off"><svg><use href="#vtx"/></svg></b><svg class="dd"><use href="#ad"/></svg><b class="t off"><svg><use href="#multi"/></svg></b><b class="t off"><svg><use href="#trash"/></svg></b><b class="t off"><svg><use href="#cut"/></svg></b><b class="t off"><svg><use href="#copy"/></svg></b><b class="t off"><svg><use href="#paste"/></svg></b><b class="t off"><svg><use href="#undo"/></svg></b><b class="t off"><svg><use href="#redo"/></svg></b></div>
</nav>
<div class="bar2"><i class="grip"></i></div>

<section class="work">
<aside class="vbar">
<i class="hgrip"></i>
<b class="t on"><svg><use href="#hand"/></svg></b><b class="t"><svg><use href="#panto"/></svg></b><b class="t"><svg><use href="#zin"/></svg></b><b class="t"><svg><use href="#zout"/></svg></b><b class="t"><svg><use href="#zfull"/></svg></b><b class="t"><svg><use href="#zsel"/></svg></b><b class="t"><svg><use href="#zlay"/></svg></b><b class="t off"><svg><use href="#znat"/></svg></b><b class="t"><svg><use href="#zprev"/></svg></b><b class="t off"><svg><use href="#znext"/></svg></b><b class="t"><svg><use href="#newmap"/></svg></b><b class="t"><svg><use href="#new3d"/></svg></b><b class="t"><svg><use href="#bkm"/></svg></b><b class="t"><svg><use href="#bkms"/></svg></b><b class="t"><svg><use href="#clockt"/></svg></b><b class="t"><svg><use href="#refresh"/></svg></b>
<i class="hgrip low"></i>
<div class="pair"><b class="t"><svg><use href="#select"/></svg></b><svg class="dd"><use href="#ad"/></svg></div>
<div class="pair"><b class="t"><svg><use href="#selval"/></svg></b><svg class="dd"><use href="#ad"/></svg></div>
<div class="pair"><b class="t"><svg><use href="#desel"/></svg></b><svg class="dd"><use href="#ad"/></svg></div>
<div class="pair"><b class="t"><svg><use href="#selloc"/></svg></b><svg class="dd"><use href="#ad"/></svg></div>
</aside>

<section class="left">
<div class="phead"><h2>Browser</h2><svg><use href="#float"/></svg><svg><use href="#close"/></svg></div>
<div class="ptools"><svg><use href="#addl"/></svg><svg><use href="#refresh"/></svg><svg><use href="#filter"/></svg><svg><use href="#collapse"/></svg><svg><use href="#info"/></svg></div>
<div class="box browser">
<div class="mid">
<ul class="rows br">
<li><svg class="a"><use href="#ar"/></svg><svg class="k"><use href="#folders"/></svg>/Volumes/Macintosh HD/Users/maples/Downlo</li>
<li><svg class="a"><use href="#ar"/></svg><svg class="k"><use href="#folder"/></svg>/Volumes/Macintosh HD/Users/maples/GitHub</li>
<li><svg class="a"><use href="#ad"/></svg><svg class="k"><use href="#folders"/></svg>/Volumes/Macintosh HD/Users/maples/Scratch</li>
<li class="l1"><svg class="a"><use href="#ar"/></svg><svg class="k"><use href="#folder"/></svg>Data</li>
<li class="l1"><svg class="a"><use href="#ar"/></svg><svg class="k"><use href="#folder"/></svg>DemoScratch</li>
<li class="l1"><svg class="a"><use href="#ar"/></svg><svg class="k"><use href="#folder"/></svg>Final Project Proposals</li>
<li class="l1"><svg class="a"><use href="#ar"/></svg><svg class="k"><use href="#folder"/></svg>Fundamentals Planning</li>
<li class="l1"><svg class="a"><use href="#ar"/></svg><svg class="k"><use href="#folder"/></svg>images</li>
<li class="l1"><svg class="a"><use href="#ad"/></svg><svg class="k"><use href="#folders"/></svg>Lab Walkthroughs</li>
<li class="l2"><svg class="a"><use href="#ar"/></svg><svg class="k"><use href="#folder"/></svg>Week01</li>
<li class="l2"><svg class="a"><use href="#ar"/></svg><svg class="k"><use href="#folder"/></svg>Week02</li>
<li class="l2"><svg class="a"><use href="#ar"/></svg><svg class="k"><use href="#folder"/></svg>Week03</li>
<li class="l2"><svg class="a"><use href="#ar"/></svg><svg class="k"><use href="#folders"/></svg>Week04</li>
<li class="l2"><svg class="a"><use href="#ad"/></svg><svg class="k"><use href="#folders"/></svg>Week05</li>
<li class="l3"><svg class="a"><use href="#ad"/></svg><svg class="k"><use href="#folders"/></svg>ex01</li>
<li class="l4"><svg class="a"><use href="#ad"/></svg><svg class="k"><use href="#folders"/></svg>L9</li>
<li class="l5"><svg class="a"></svg><svg class="k"><use href="#shp"/></svg>Lakes.shp</li>
<li class="l5"><svg class="a"></svg><svg class="k"><use href="#shp"/></svg>Public.shp</li>
<li class="l5 sel"><svg class="a"></svg><svg class="k"><use href="#shp"/></svg>roads.shp</li>
<li class="l5"><svg class="a"></svg><svg class="k"><use href="#shp"/></svg>roadsBuffer300.shp</li>
<li class="l5"><svg class="a"><use href="#ar"/></svg><svg class="k"><use href="#shp"/></svg>roadsBuffer300noDissolve.shp</li>
<li class="l4"><svg class="a"><use href="#ar"/></svg><svg class="k"><use href="#q"/></svg>EX01 - Buffer Suitability Analysis</li>
<li class="l1"><svg class="a"><use href="#ar"/></svg><svg class="k"><use href="#folder"/></svg>Pantanal</li>
<li class="l1"><svg class="a"><use href="#ar"/></svg><svg class="k"><use href="#folder"/></svg>Tomlin-Browns Pond</li>
<li class="l1"><svg class="a"><use href="#ar"/></svg><svg class="k"><use href="#folder"/></svg>Week 02</li>
<li class="l1"><svg class="a"><use href="#ar"/></svg><svg class="k"><use href="#folder"/></svg>Week 03</li>
<li class="l1"><svg class="a"><use href="#ar"/></svg><svg class="k"><use href="#folder"/></svg>Week 04</li>
<li class="l1"><svg class="a"><use href="#ar"/></svg><svg class="k"><use href="#folder"/></svg>Week 05</li>
</ul>
<div class="vs"><b><svg><use href="#au"/></svg></b><i class="pre"></i><i class="thumb"></i><i class="post"></i><b><svg><use href="#ad"/></svg></b></div>
</div>
<div class="hs"><b><svg><use href="#al"/></svg></b><i class="thumb"></i><i class="post"></i><b><svg><use href="#ar"/></svg></b><i class="corner"></i></div>
</div>
<i class="split"></i>
<div class="phead"><h2>Layers</h2><svg><use href="#float"/></svg><svg><use href="#close"/></svg></div>
<div class="ptools lay"><svg><use href="#brush"/></svg><svg><use href="#group"/></svg><svg viewBox="0 0 48 48"><use href="#eye"/><path d="M33 39h15l-7.500 8z" fill="#555"/></svg><svg viewBox="0 0 48 48"><use href="#filter"/><path d="M34 39h14l-7 8z" fill="#555"/></svg><svg><use href="#eps"/></svg><svg class="dd"><use href="#ad"/></svg><svg><use href="#expand"/></svg><svg><use href="#collapse"/></svg><svg><use href="#reml"/></svg></div>
<div class="box layers">
<ul class="rows ly">
<li class="sel"><b class="cb"><svg><use href="#tick"/></svg></b><i class="sw pink"></i><u>Buffered</u><b class="mem"><svg viewBox="0 0 32 32"><path d="M7 4v24M12 4v24M16 4v24M20 4v24M25 4v24" stroke="#666" stroke-width="1.500"/><rect x="4" y="9" width="24" height="14" rx="2" fill="#fff" stroke="#666" stroke-width="2"/></svg></b></li>
<li><b class="cb"><svg><use href="#tick"/></svg></b><i class="sw line"></i>roads</li>
<li><b class="cb"><svg><use href="#tick"/></svg></b><i class="sw green"></i>roadsBuffer300</li>
</ul>
</div>
</section>

<i class="vsplit"></i>
<section class="canvas"><svg id="map" viewBox="944 245 2242 2337"></svg></section>
<i class="vsplit"></i>

<section class="right">
<div class="phead"><h2>Processing Toolbox</h2><svg><use href="#float"/></svg><svg><use href="#close"/></svg></div>
<div class="ptools"><svg><use href="#gears"/></svg><svg><use href="#py"/></svg><svg><use href="#clock"/></svg><svg><use href="#log"/></svg><i class="sep"></i><svg><use href="#edf"/></svg><i class="sep"></i><svg><use href="#wr2"/></svg></div>
<div class="search"><svg><use href="#mag"/></svg><span>Buffer</span><svg class="clr" viewBox="0 0 26 22"><path d="M0 11L8 0h18v22H8z" fill="#8c8c8c"/><path d="M11 5l10 12M21 5L11 17" stroke="#fff" stroke-width="2"/></svg></div>
<div class="box tools">
<ul class="rows pr">
<li><svg class="a"><use href="#ar"/></svg><svg class="k"><use href="#clock"/></svg>Recently used</li>
<li><svg class="a"><use href="#ad"/></svg><svg class="k"><use href="#q"/></svg>Vector geometry</li>
<li class="l1 sel"><svg class="a"></svg><svg class="k"><use href="#bufi"/></svg>Buffer</li>
<li class="l1"><svg class="a"></svg><svg class="k"><use href="#gear"/></svg>Create wedge buffers</li>
<li class="l1"><svg class="a"></svg><svg class="k"><use href="#gear"/></svg>Multi-ring buffer (constant distance)</li>
<li class="l1"><svg class="a"></svg><svg class="k"><use href="#shapes"/></svg>Rectangles,ovals,diamonds</li>
<li class="l1"><svg class="a"></svg><svg class="k"><use href="#gear"/></svg>Single sided buffer</li>
<li class="l1"><svg class="a"></svg><svg class="k"><use href="#gear"/></svg>Tapered buffers</li>
<li class="l1"><svg class="a"></svg><svg class="k"><use href="#gear"/></svg>Variable width buffer (by M value)</li>
<li><svg class="a"><use href="#ad"/></svg><svg class="k"><use href="#q"/></svg>Vector selection</li>
<li class="l1"><svg class="a"></svg><svg class="k"><use href="#gear"/></svg>Extract within distance</li>
<li class="l1"><svg class="a"></svg><svg class="k"><use href="#seld"/></svg>Select within distance</li>
<li><svg class="a"><use href="#ad"/></svg><svg class="k"><use href="#gdal"/></svg>GDAL</li>
<li class="l1 g"><svg class="a"><use href="#ad"/></svg>Vector geoprocessing</li>
<li class="l2"><svg class="a"></svg><svg class="k"><use href="#gdal"/></svg>Buffer vectors</li>
<li class="l2"><svg class="a"></svg><svg class="k"><use href="#gdal"/></svg>One side buffer</li>
<li><svg class="a"><use href="#ad"/></svg><svg class="k"><use href="#grass"/></svg>GRASS</li>
<li class="l1 g"><svg class="a"><use href="#ad"/></svg>Raster (r.*)</li>
<li class="l2"><svg class="a"></svg><svg class="k"><use href="#grass"/></svg>r.buffer</li>
<li class="l2"><svg class="a"></svg><svg class="k"><use href="#grass"/></svg>r.buffer.lowmem</li>
<li class="l1 g"><svg class="a"><use href="#ad"/></svg>Vector (v.*)</li>
<li class="l2"><svg class="a"></svg><svg class="k"><use href="#grass"/></svg>v.buffer</li>
<li><svg class="a"><use href="#ad"/></svg><svg class="k"><use href="#saga"/></svg>SAGA Next Gen</li>
<li class="l1 g"><svg class="a"><use href="#ad"/></svg>Raster tools</li>
<li class="l2"><svg class="a"></svg><svg class="k"><use href="#saga"/></svg>Raster buffer</li>
<li class="l2"><svg class="a"></svg><svg class="k"><use href="#saga"/></svg>Raster proximity buffer</li>
<li class="l2"><svg class="a"></svg><svg class="k"><use href="#saga"/></svg>Threshold raster buffer</li>
<li class="l1 g"><svg class="a"><use href="#ad"/></svg>Vector general</li>
<li class="l2"><svg class="a"></svg><svg class="k"><use href="#saga"/></svg>Shapes buffer</li>
<li><svg class="a"><use href="#ad"/></svg><svg class="k"><use href="#wbt"/></svg>WhiteboxTools</li>
<li class="l1 g"><svg class="a"><use href="#ad"/></svg>GIS Analysis - Distance Tools</li>
<li class="l2"><svg class="a"></svg><svg class="k"><use href="#wbt"/></svg>BufferRaster</li>
</ul>
</div>
</section>
</section>

<footer class="status">
<div class="fld locate"><svg><use href="#mag"/></svg>Type to locate (⌘K)</div>
<span class="msg">1 legend entry removed.</span>
<span class="c-lab">Coordinate</span><div class="fld coord">506594,5003135</div>
<svg class="track" viewBox="0 0 32 32"><path d="M6 6l6-4 6 12 6 8-6 8-6-6-4-8z" fill="#fff" stroke="#111" stroke-width="3"/><path d="M10 8l6 12M5 15l6 6M22 3l6 5M20 10l8 8-4 4" stroke="#111" stroke-width="2.500" fill="none"/></svg>
<span class="s-lab">Scale</span><div class="fld combo"><span>1:27688</span><b><svg><use href="#ad"/></svg></b></div>
<svg class="lock" viewBox="0 0 26 32"><path d="M7 15V8q0-6 6-6t6 6v7" fill="none" stroke="#999" stroke-width="3"/><rect x="2" y="15" width="22" height="16" rx="2" fill="#666"/></svg>
<span class="m-lab">Magnifier</span><div class="fld spin"><span>100%</span><b><svg><use href="#au"/></svg><svg><use href="#ad"/></svg></b></div>
<span class="r-lab">Rotation</span><div class="fld spin two"><span>0.0 °</span><b><svg><use href="#au"/></svg><svg><use href="#ad"/></svg></b></div>
<b class="cb"><svg><use href="#tick"/></svg></b><span class="rn">Render</span>
<svg class="globe" viewBox="0 0 32 32"><path d="M1 14h29l-2-5q-5-7-13-7T3 9z" fill="#999"/><circle cx="16" cy="16" r="12.500" fill="none" stroke="#666" stroke-width="1.600"/><path d="M16 3v26M4 16h24M6 9h20M6 23h20M11 5q-5 11 0 22M21 5q5 11 0 22" fill="none" stroke="#666" stroke-width="1.300"/></svg>
<span class="ep">EPSG:26915</span>
<svg class="bub" viewBox="0 0 32 32"><path d="M16 2c9 0 15 5 15 12 0 4-2 7-5 9l3 8-9-5C9 27 1 22 1 14 1 7 7 2 16 2z" fill="#666"/><path d="M8 13h4M14 13h4M20 13h4" stroke="#fff" stroke-width="4"/></svg>
</footer>
</main>
<script src="map.js"></script>
</body>
</html>
```
FILE: styles.css
```css
/* 1rem = 100 design pixels of a 4336-wide desktop */
html { font-size: 2.30627vw; }
* { box-sizing: border-box; margin: 0; padding: 0; }
body {
  height: 100vh; overflow: hidden; background: #fff;
  font-family: Inter, "Liberation Sans", sans-serif; color: #262626;
  padding: .74rem 1.11rem 1.46rem 1.11rem;
}
i { font-style: normal; } b { font-weight: inherit; }
ul { list-style: none; }
svg { display: block; flex: none; }
.defs { width: 0; height: 0; float: left; }
.it { font-family: Inter, sans-serif; letter-spacing: 0; }
.se { font-family: "Liberation Serif", serif; }

.window {
  height: 25.74rem; display: flex; flex-direction: column;
  background: #f5f5f5; border: .02rem solid #3e3e3e; border-radius: .22rem; overflow: hidden;
  box-shadow: 0 .42rem .75rem rgba(0,0,0,.42), 0 0 .3rem rgba(0,0,0,.12);
}
.titlebar { flex: none; height: .58rem; display: flex; align-items: center; gap: .16rem; padding-left: .15rem; background: #fdfdfd; border-bottom: .02rem solid #000; }
.light { width: .24rem; height: .24rem; border-radius: 50%; }
.red { background: #dc2e22; border: .01rem solid #b5231a; }
.amber { background: #966a20; border: .01rem solid #76511a; }
.green { background: #3c8622; border: .01rem solid #2c6a18; }
.titlebar h1 { flex: 1; text-align: center; margin-right: 1.27rem; font-size: .256rem; letter-spacing: .02em; font-weight: 700; color: #3a3a3a; white-space: nowrap; }

.bars { flex: none; height: .75rem; display: flex; background: #ddd; }
.tb { display: flex; align-items: center; background: linear-gradient(#fff, #f5f5f5); border-bottom: .02rem solid #b8b8b8; margin-right: .01rem; }
.tb.grow { flex: 1; margin-right: 0; }
.t { display: flex; flex: none; width: .66rem; height: .62rem; align-items: center; justify-content: center; border-radius: .06rem; }
.t svg { width: .48rem; height: .48rem; }
.t.on { width: .62rem; margin: 0 .02rem; background: #e0e0e0; border: .02rem solid #b0b0b0; }
.t.off svg { opacity: .3; }
.dd { width: .24rem; height: .24rem; }
.grip { flex: none; width: .05rem; height: .34rem; margin: 0 .09rem 0 .18rem; background: radial-gradient(circle, #aaa .011rem, transparent .014rem) 0 0 / .04rem .058rem; }
.tb:first-child .grip { margin: 0 .08rem 0 .11rem; }
.tb.labels .grip { margin: 0 .08rem 0 .14rem; }
.sep { width: .02rem; height: .38rem; background: #d8d8d8; margin: 0 .06rem; }
.bar2 { flex: none; height: .34rem; background: linear-gradient(#fff, #f5f5f5); border-bottom: .02rem solid #b8b8b8; }
.bar2 .grip { display: block; height: .32rem; margin-left: .11rem; }

.work { flex: 1; min-height: 0; display: flex; }
.vbar { flex: none; width: 1.01rem; display: flex; flex-direction: column; align-items: center; background: linear-gradient(90deg, #fff, #f3f3f3); border-right: .02rem solid #b8b8b8; }
.vbar .t { height: .6rem; margin: .02rem 0; }
.vbar .t.on { width: .62rem; }
.hgrip { width: .34rem; height: .1rem; margin: .1rem 0 .05rem; background: radial-gradient(circle, #aaa .011rem, transparent .014rem) 0 0 / .058rem .05rem; }
.hgrip.low { margin: .16rem 0 .09rem; }
.vbar .pair { display: flex; align-items: center; height: .64rem; margin-right: -.01rem; }
.pair .t { width: .7rem; }

.left { flex: none; width: 7.18rem; display: flex; flex-direction: column; padding: 0 .05rem 0 .03rem; }
.phead { flex: none; height: .43rem; display: flex; align-items: center; padding: 0 .02rem 0 .08rem; gap: .065rem; }
.phead h2 { flex: 1; font-size: .217rem; font-weight: 400; }
.phead svg { width: .22rem; height: .22rem; }
.ptools { flex: none; height: .59rem; display: flex; align-items: center; padding: 0 0 .05rem .14rem; gap: .184rem; }
.ptools svg { width: .32rem; height: .32rem; }
.ptools .dd { width: .24rem; height: .24rem; margin: 0 -.08rem 0 -.11rem; }
.box { background: #fff; border: .01rem solid #b8b8b8; }
.browser { flex: none; height: 10.3rem; display: flex; flex-direction: column; }
.mid { flex: 1; min-height: 0; display: flex; overflow: hidden; }
.rows { flex: 1; min-width: 0; overflow: hidden; padding-top: .01rem; }
.rows li { height: .36rem; display: flex; align-items: center; white-space: nowrap; font-size: .246rem; letter-spacing: .018em; }
.rows .sel { background: #dcdcdc; color: #000; }
.rows .a { width: .24rem; height: .24rem; }
.rows .k { width: .32rem; height: .32rem; }
.br li { padding-left: .37rem; } .br .a { margin-right: .1rem; } .br .k { margin-right: .125rem; }
.br .l1 { padding-left: .69rem; } .br .l2 { padding-left: 1.01rem; } .br .l3 { padding-left: 1.33rem; }
.br .l4 { padding-left: 1.65rem; } .br .l5 { padding-left: 1.97rem; }
.vs { flex: none; width: .27rem; display: flex; flex-direction: column; border-left: .01rem solid #b8b8b8; }
.vs b, .hs b { display: flex; align-items: center; justify-content: center; background: #fafafa; flex: none; }
.vs b { height: .27rem; } .vs b svg, .hs b svg { width: .2rem; height: .2rem; }
.vs .pre { height: .31rem; background: #ececec; border-top: .01rem solid #b8b8b8; }
.vs .thumb { height: 4.35rem; background: linear-gradient(90deg, #fff, #f6f6f6); border: solid #b8b8b8; border-width: .01rem 0; }
.vs .post { flex: 1; background: #ececec; border-bottom: .01rem solid #b8b8b8; }
.hs { flex: none; height: .28rem; display: flex; border-top: .01rem solid #b8b8b8; }
.hs b { width: .28rem; }
.hs .thumb { width: 5.3rem; background: linear-gradient(#fff, #f6f6f6); border: solid #b8b8b8; border-width: 0 .01rem; }
.hs .post { flex: 1; background: #ececec; border-right: .01rem solid #b8b8b8; }
.corner { width: .26rem; border-left: .01rem solid #b8b8b8; background: #f5f5f5; }
.split { flex: none; width: .36rem; height: .04rem; margin: .05rem 0 .03rem 3.42rem; background: radial-gradient(circle, #aaa .011rem, transparent .014rem) 0 0 / .058rem .04rem; }
.lay { height: .6rem; padding-bottom: .07rem; }
.layers { flex: 1; }
.ly li { font-weight: 700; padding-left: .48rem; font-size: .255rem; letter-spacing: .03em; }
.cb { width: .26rem; height: .26rem; background: #fff; border: .02rem solid #b8b8b8; flex: none; }
.cb svg { width: .22rem; height: .22rem; }
.sw { width: .32rem; height: .32rem; margin: 0 .12rem 0 .13rem; border: .01rem solid #232323; flex: none; }
.pink { background: #f3a6b2; } .green.sw { background: #85b66f; }
.line { height: .025rem; border: 0; background: #b0705c; }
.ly u { flex: 1; text-underline-offset: .04rem; text-decoration-thickness: .025rem; }
.mem { width: .32rem; height: .34rem; background: #fff; border-radius: .03rem; margin-right: .09rem; display: flex; align-items: center; }
.mem svg { width: .32rem; height: .32rem; }

.vsplit { flex: none; width: .11rem; background: radial-gradient(circle, #aaa .012rem, transparent .015rem) center / .11rem .058rem repeat-y; background-clip: content-box; padding: 11.6rem 0; }
.canvas { flex: none; width: 22.46rem; background: #fff; border: .01rem solid #b8b8b8; margin-top: .02rem; }
.canvas svg { width: 22.42rem; height: 23.37rem; }
.casing, .fill { fill: none; stroke-linecap: round; stroke-linejoin: round; }
.casing { stroke: #232323; stroke-width: 124.6; }
.fill { stroke: #f3a6b2; stroke-width: 120.6; }

.right { flex: 1; min-width: 0; display: flex; flex-direction: column; padding-left: .02rem; }
.right .phead { padding: 0 .03rem 0 .07rem; }
.right .ptools { padding-left: .15rem; gap: .18rem; }
.right .sep { margin: 0 -.025rem; height: .26rem; }
.search { flex: none; height: .48rem; background: #fff; border: .02rem solid #b0b0b0; border-right-width: .01rem; border-radius: .05rem; display: flex; align-items: center; padding: 0 .15rem 0 .15rem; font-size: .246rem; letter-spacing: .018em; }
.search svg { width: .26rem; height: .26rem; }
.search span { flex: 1; margin-left: .15rem; }
.search .clr { width: .26rem; height: .2rem; }
.tools { flex: 1; border-right: 0; }
.pr { padding-top: .015rem; }
.pr li { padding-left: .08rem; } .pr .a { margin-right: .14rem; } .pr .k { margin-right: .13rem; }
.pr .l1 { padding-left: .48rem; } .pr .l2 { padding-left: .88rem; }
.pr .l1.g { height: .32rem; } .pr .g .a { margin-right: .15rem; }

.status { flex: none; height: .62rem; display: flex; align-items: center; font-size: .217rem; letter-spacing: .012em; color: #262626; white-space: nowrap; }
.status > * { flex: none; }
.fld { height: .43rem; background: #fff; border: .02rem solid #b4b4b4; border-radius: .04rem; display: flex; align-items: center; }
.locate { width: 4.25rem; margin-left: .09rem; color: #777; font-size: .246rem; letter-spacing: .022em; padding-left: .14rem; }
.locate svg { width: .24rem; height: .24rem; margin-right: .16rem; }
.msg { width: 19.15rem; margin-left: .17rem; color: #000; }
.c-lab { width: 1.23rem; }
.coord { width: 2.23rem; padding-left: .16rem; }
.track { width: .32rem; height: .32rem; margin-left: .07rem; }
.s-lab { width: .65rem; margin-left: .27rem; color: #000; }
.combo { width: 1.85rem; height: .48rem; padding-left: .06rem; }
.fld span { flex: 1; }
.fld b { height: 100%; border-left: .01rem solid #b4b4b4; display: flex; flex-direction: column; align-items: center; justify-content: center; background: #fafafa; }
.combo b { width: .39rem; } .spin b { width: .26rem; justify-content: space-around; }
.fld b svg { width: .2rem; height: .2rem; }
.lock { width: .26rem; height: .32rem; margin-left: .23rem; }
.m-lab { width: 1.03rem; margin-left: .19rem; color: #000; }
.spin { width: 1.85rem; height: .45rem; padding-left: .08rem; }
.r-lab { width: 1.06rem; margin-left: .21rem; }
.spin.two { height: .43rem; }
.status .cb { margin: 0 .12rem 0 .14rem; }
.rn { width: 1.05rem; }
.globe { width: .32rem; height: .32rem; }
.ep { width: 1.76rem; margin-left: .04rem; color: #000; }
.bub { width: .32rem; height: .32rem; }
```
FILE: map.js
```js
// Road centre lines in map-canvas units, in drawing order. Each one is drawn as a round buffer.
const roads = [
  "1346,606 1334,642 1312,771",
  "1820,608 1820,771",
  "2065,606 2065,771",
  "2392,610 2392,1186",
  "1059,772 1310,769 1740,770 1823,771",
  "1823,771 2065,771",
  "1079,606 1079,772",
  "1059,771 1079,774",
  "1358,768 1359,791",
  "1337,769 1337,790",
  "1739,771 1739,1018",
  "2065,771 2065,1018",
  "1739,1018 2065,1018",
  "2065,1018 2065,1097",
  "2066,1097 2137,1102 2160,1120 2168,1184",
  "1902,1018 1902,1348",
  "1739,1018 1720,1019 1648,1134 1603,1168 1545,1262 1484,1262 1438,1290 1404,1303 1345,1309",
  "1309,769 1305,792",
  "1305,792 1205,1280",
  "1230,1279 1230,1281",
  "1205,1280 1207,1281",
  "1320,1309 1345,1309",
  "1315,1309 1315,1318",
  "1240,1322 1315,1322",
  "1237,1322 1237,1362",
  "1177,1322 1200,1323",
  "1120,1350 1230,1350",
  "1202,1350 1195,1388",
  "1130,1388 1160,1388",
  "1140,1409 1150,1409",
  "1172,1409 1177,1416",
  "1140,1431 1173,1431",
  "1171,1431 1160,1500",
  "1199,1528 1200,1535",
  "1142,1525 1150,1527",
  "1144,1551 1150,1552",
  "1188,1551 1188,1555",
  "1203,1551 1206,1556",
  "1059,771 1060,1415",
  "1060,1415 1060,1596",
  "1456,1425 1458,1425",
  "1293,1334 1322,1385 1325,1428 1400,1430",
  "1408,1431 1408,1590 1404,1714",
  "1204,1595 1215,1597 1244,1617 1403,1714",
  "1403,1716 1450,1720 1482,1713 1553,1677 1900,1678",
  "1060,1596 1060,1924",
  "1140,1595 1072,1924",
  "1403,1714 1403,1841",
  "1060,1924 1237,1924 1262,1921 1314,1906 1403,1910",
  "1061,1924 1071,1922",
  "1060,1924 1060,1978",
  "1126,2075 1124,2086",
  "1060,1978 1060,2086",
  "1079,2088 1151,2187 1156,2223",
  "2168,1184 2394,1186",
  "2719,1116 2719,1190",
  "2394,1186 2538,1189 2565,1185 2602,1186 2640,1197 2718,1197",
  "2719,1190 2719,1654",
  "2168,1184 2164,1348",
  "1902,1348 2163,1348",
  "1902,1355 1903,1385 1901,1410 1901,1536",
  "1963,1348 1963,1409 1957,1440 1963,1475 1952,1535",
  "2163,1348 2160,1478 2147,1505 2147,1597",
  "1901,1535 1944,1537",
  "1963,1593 2150,1597",
  "1901,1591 1949,1591",
  "1901,1536 1901,1600",
  "1909,1606 1909,1612",
  "2147,1597 2205,1595",
  "2205,1595 2555,1595 2590,1626 2632,1628 2718,1654",
  "2719,1518 2814,1524 2843,1550",
  "2718,1654 2716,1928",
  "2181,1601 2197,1625 2223,1752 2223,1843",
  "1960,1848 2025,1839 2060,1843",
  "1898,1657 1902,1670 1899,1860",
  "1403,1841 1627,1841 1685,1865 1818,1869 1897,1866",
  "1403,1897 1403,2088",
  "1817,1869 1814,1930 1817,1978",
  "2060,1843 2225,1843",
  "2225,1843 2226,1928",
  "2142,1927 2225,1928",
  "2142,1927 2142,2111",
  "1990,1930 1967,1926 1926,1953 1906,1990 1898,2030 1898,2078 1936,2086 1950,2115",
  "1403,2088 1740,2089 1790,2088 1858,2090",
  "1856,2090 1921,2093",
  "1403,2088 1403,2193 1393,2223",
  "1921,2093 1960,2120 1985,2185",
  "2060,1843 2060,1914 2054,1938 2065,1990 2060,2020 2060,2129",
  "2141,2112 2190,2125",
  "2064,2128 2066,2128",
  "2052,2129 2058,2172",
  "1989,2152 1977,2188 1976,2224",
  "2249,2111 2255,2120",
  "2624,1840 2683,1874 2694,1925",
  "2717,1928 2799,1929 2798,1980 2783,1991",
  "3073,1875 3055,1922 3055,2011",
  "2719,1518 2814,1524 2843,1550 2868,1762 2890,1818 2897,1858 2962,1978 2990,2002 3055,2011",
  "2715,1930 2694,1970 2650,2006 2636,2045 2635,2173",
  "3055,2011 3055,2151",
  "2635,2172 2808,2172 2940,2157 2990,2141 3055,2152",
  "2482,2173 2635,2173",
  "2225,1928 2448,1928 2470,1957 2469,2174",
  "2210,2175 2482,2174",
  "2207,2164 2203,2180 2187,2221",
  "2593,2174 2592,2223",
  "3055,2152 3055,2195 3065,2221",
  "2746,618 2733,652",
  "2796,617 2796,650 2748,652",
  "2959,620 2982,705 2999,885 3050,975 3072,1043",
  "3052,1000 3069,1088"
];
const map = document.getElementById("map");
for (const points of roads) {
  for (const layer of ["casing", "fill"]) {
    const line = document.createElementNS("http://www.w3.org/2000/svg", "polyline");
    line.setAttribute("class", layer);
    line.setAttribute("points", points);
    map.append(line);
  }
}
```
